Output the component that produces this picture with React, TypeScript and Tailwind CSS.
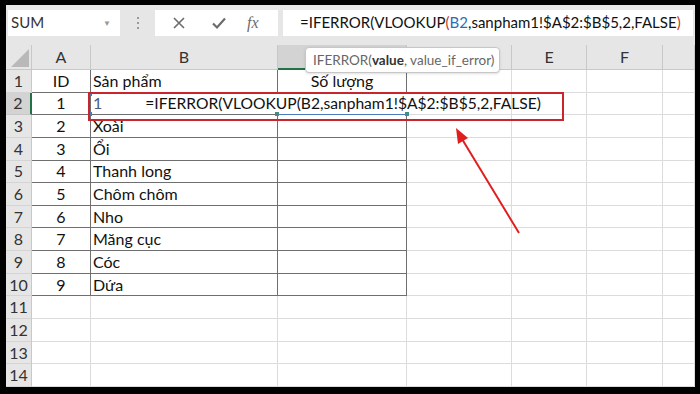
import React from "react";

const font = { fontFamily: "Lato, 'Noto Sans', sans-serif" };

// C and D labels sit under the function tooltip, so they are left blank
const cols = ["A", "B", "", "", "E", "F", ""];

const data: string[][] = [
  ["ID", "Sản phẩm", "Số lượng"],
  ["1", "", ""],
  ["2", "Xoài", ""],
  ["3", "Ổi", ""],
  ["4", "Thanh long", ""],
  ["5", "Chôm chôm", ""],
  ["6", "Nho", ""],
  ["7", "Măng cục", ""],
  ["8", "Cóc", ""],
  ["9", "Dứa", ""],
];

function FormulaBar() {
  return (
    <div className="flex h-[35px] items-center bg-[#e6e6e6] pl-[2px] pr-[2px]">
      <div className="flex h-[26px] w-[112px] items-center justify-between bg-white pl-[3px] pr-[9px]">
        <span className="text-[15px] text-[#333]">SUM</span>
        <span className="text-[8px] text-[#999]">▼</span>
      </div>
      <div className="flex w-[35px] flex-col items-center gap-[3px]">
        <span className="h-[2px] w-[2px] bg-[#9a9a9a]" />
        <span className="h-[2px] w-[2px] bg-[#9a9a9a]" />
        <span className="h-[2px] w-[2px] bg-[#9a9a9a]" />
      </div>
      <div className="flex h-[26px] w-[123px] items-center bg-white">
        <svg width="14" height="14" viewBox="0 0 14 14" className="ml-[17px]">
          <path d="M2 2 L12 12 M12 2 L2 12" stroke="#6b6b6b" strokeWidth="1.6" />
        </svg>
        <svg width="16" height="14" viewBox="0 0 16 14" className="ml-[25px]">
          <path d="M2 7.5 L6 11.5 L14 2.5" stroke="#6b6b6b" strokeWidth="2.2" fill="none" />
        </svg>
        <span
          className="ml-[20px] text-[16px] italic text-[#6b6b6b]"
          style={{ fontFamily: "'Liberation Serif', serif" }}
        >
          fx
        </span>
      </div>
      <div className="ml-[5px] flex h-[26px] flex-1 items-center whitespace-nowrap bg-white pl-[17px] text-[15px] text-[#111]">
        <span>=IFERROR(VLOOKUP</span>
        <span className="text-[#c0392b]">(</span>
        <span className="text-[#2e6db4]">B2</span>
        <span>,sanpham1!$A$2:$B$5,2,FALSE</span>
        <span className="text-[#c0392b]">)</span>
      </div>
    </div>
  );
}

function Sheet() {
  const rows = Array.from({ length: 14 }, (_, i) => i + 1);
  return (
    <div className="grid grid-cols-[26px_59px_187px_129px_105px_75px_76px_1fr] grid-rows-[25px_repeat(14,22.65px)] bg-white">
      <div className="relative border-b border-r border-[#c8c8c8] bg-[#e6e6e6]">
        <svg width="18" height="18" viewBox="0 0 18 18" className="absolute bottom-[2px] right-[2px]">
          <polygon points="18,0 18,18 0,18" fill="#b9b9b9" />
        </svg>
      </div>
      {cols.map((c, i) => (
        <div
          key={i}
          className={
            i === 2
              ? "flex items-center justify-center border-b-2 border-r border-b-[#217346] border-r-[#c8c8c8] bg-[#d3d3d3] text-[16px] text-[#333]"
              : "flex items-center justify-center border-b border-r border-[#c8c8c8] bg-[#e6e6e6] text-[16px] text-[#333]"
          }
        >
          {c}
        </div>
      ))}
      {rows.map((r) => {
        const row = data[r - 1];
        return (
          <React.Fragment key={r}>
            <div
              className={
                r === 2
                  ? "flex items-center justify-center border-b border-r-2 border-b-[#c8c8c8] border-r-[#217346] bg-[#d3d3d3] text-[16px] text-[#333]"
                  : "flex items-center justify-center border-b border-r border-b-[#d4d4d4] border-r-[#c8c8c8] bg-[#e6e6e6] text-[16px] text-[#333]"
              }
            >
              {r}
            </div>
            {cols.map((_, ci) => {
              const inTable = row && ci < 3;
              const hideRight = r === 2 && (ci === 1 || ci === 2);
              let cls = "flex items-center text-[16px] text-[#111] ";
              if (inTable) {
                cls += hideRight
                  ? "border-b border-[#6f6f6f] "
                  : "border-b border-r border-[#6f6f6f] ";
              } else {
                cls += hideRight
                  ? "border-b border-[#dcdcdc] "
                  : "border-b border-r border-[#dcdcdc] ";
              }
              if (ci === 0 || (r === 1 && ci === 2)) cls += "justify-center ";
              else cls += "pl-[2px] ";
              if (r === 2 && ci === 1) {
                return (
                  <div key={ci} className={cls + "relative z-10 whitespace-nowrap"}>
                    <span className="text-[#4a5a7a]">1</span>
                    <span className="ml-[43px] text-[15.6px]">=IFERROR(VLOOKUP(B2,sanpham1!$A$2:$B$5,2,FALSE)</span>
                  </div>
                );
              }
              const text = row && ci < 3 ? row[ci] : "";
              return (
                <div key={ci} className={cls}>
                  {text}
                </div>
              );
            })}
          </React.Fragment>
        );
      })}
    </div>
  );
}

export default function App() {
  return (
    <div className="relative h-[394px] w-[700px] overflow-hidden bg-black pb-[7px] pl-[6px] pr-[5px] pt-[5px]" style={font}>
      <div className="h-full overflow-hidden bg-white">
        <FormulaBar />
        <div className="h-[5px] bg-[#e6e6e6]" />
        <Sheet />
      </div>

      {/* B2 reference underline with handles */}
      <div className="absolute left-[90px] top-[114px] h-[1px] w-[317px] bg-[#4a7ab8]" />
      <div className="absolute left-[88px] top-[92px] h-[4px] w-[4px] bg-[#4a7ab8]" />
      <div className="absolute left-[88px] top-[112px] h-[4px] w-[4px] bg-[#4a7ab8]" />
      <div className="absolute left-[275px] top-[112px] h-[4px] w-[4px] bg-[#3f8f8a]" />
      <div className="absolute left-[405px] top-[112px] h-[4px] w-[4px] bg-[#3f8f8a]" />

      {/* Red highlight box */}
      <div className="absolute left-[88px] top-[92px] h-[29px] w-[476px] border-2 border-[#c8252c]" />

      {/* Function tooltip */}
      <div className="absolute left-[305px] top-[47px] flex h-[26px] w-[195px] items-center whitespace-nowrap rounded-[4px] border border-[#c6c6c6] bg-white pl-[7px] text-[13.5px] text-[#666] shadow-sm">
        <span>IFERROR(</span>
        <span className="font-bold text-[#333]">value</span>
        <span>, value_if_error)</span>
      </div>

      {/* Arrow */}
      <svg className="absolute left-0 top-0" width="700" height="394" viewBox="0 0 700 394">
        <line x1="519" y1="233" x2="462" y2="139" stroke="#e01e1e" strokeWidth="2" />
        <polygon points="456,128 468,138 458,144" fill="#e01e1e" />
      </svg>
    </div>
  );
}
